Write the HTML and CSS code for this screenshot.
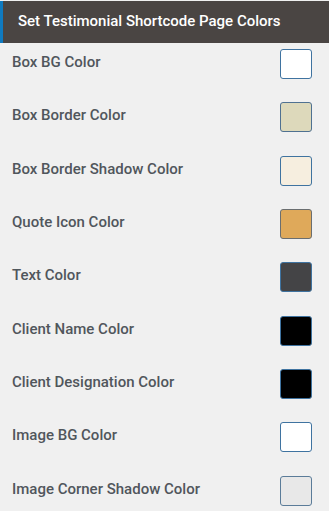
FILE: index.html
```html
<!DOCTYPE html>
<html>
<head>
<meta charset="utf-8">
<link rel="stylesheet" href="styles.css">
</head>
<body>
<div class="panel">
  <div class="header">Set Testimonial Shortcode Page Colors</div>
  <div class="rows">
    <div class="row"><span class="label">Box BG Color</span><span class="swatch sw-white"></span></div>
    <div class="row"><span class="label">Box Border Color</span><span class="swatch sw-beige"></span></div>
    <div class="row"><span class="label">Box Border Shadow Color</span><span class="swatch sw-cream"></span></div>
    <div class="row"><span class="label">Quote Icon Color</span><span class="swatch sw-orange"></span></div>
    <div class="row"><span class="label">Text Color</span><span class="swatch sw-dark"></span></div>
    <div class="row"><span class="label">Client Name Color</span><span class="swatch sw-black"></span></div>
    <div class="row"><span class="label">Client Designation Color</span><span class="swatch sw-black"></span></div>
    <div class="row"><span class="label">Image BG Color</span><span class="swatch sw-white"></span></div>
    <div class="row"><span class="label">Image Corner Shadow Color</span><span class="swatch sw-grey"></span></div>
  </div>
</div>
</body>
</html>
```

FILE: styles.css
```css
html, body {
  margin: 0;
  padding: 0;
  background: #f0f0f0;
}
.panel {
  padding-top: 1px;
  font-family: Roboto, "Liberation Sans", sans-serif;
}
.header {
  height: 42px;
  box-sizing: border-box;
  background: #4a4543;
  border-left: 3px solid #0f7ac0;
  color: #ffffff;
  font-size: 15px;
  font-weight: 500;
  display: flex;
  align-items: center;
  padding-left: 15px;
  padding-bottom: 2px;
}
.rows {
  display: flex;
  flex-direction: column;
}
.row {
  height: 53.33px;
  box-sizing: border-box;
  padding: 6px 17px 0 12px;
  display: flex;
  justify-content: space-between;
  align-items: flex-start;
}
.label {
  font-size: 15px;
  font-weight: 500;
  color: #50565c;
  line-height: 20px;
  margin-top: 3px;
}
.swatch {
  width: 32px;
  height: 30px;
  box-sizing: border-box;
  border: 1.5px solid #3f73a0;
  border-radius: 3px;
}
.sw-white { background: #ffffff; }
.sw-beige { background: #ddd9bb; border-color: #4f7191; }
.sw-cream { background: #f6eedf; }
.sw-orange { background: #dfa95a; border-color: #6a6e70; }
.sw-dark { background: #444446; }
.sw-black { background: #000000; }
.sw-grey { background: #e8e8e8; border-color: #5b7c99; }
```
